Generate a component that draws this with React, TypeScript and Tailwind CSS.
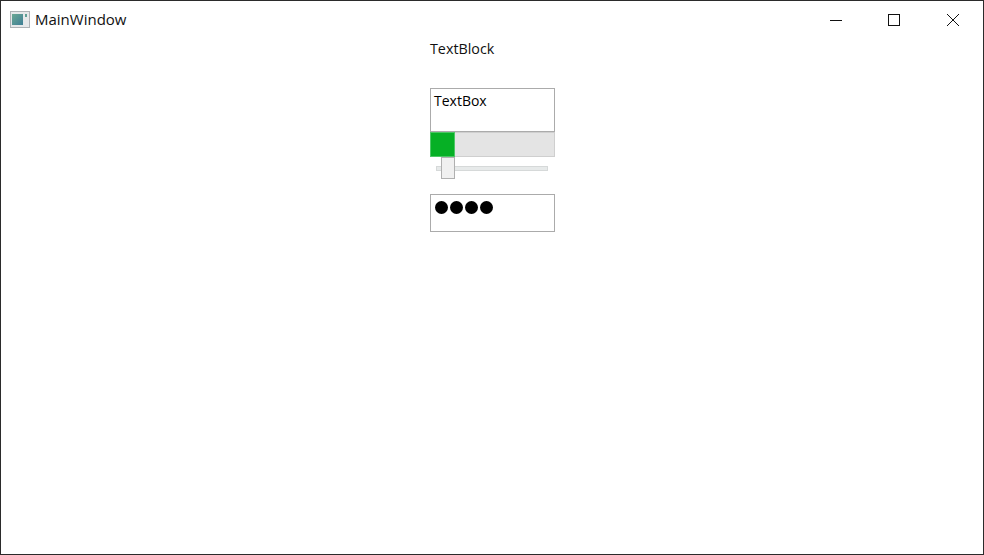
export default function App() {
  return (
    <div className="flex h-[555px] w-[984px] flex-col overflow-hidden border border-[#2b2b2b] bg-white font-['Open_Sans','Noto_Sans',sans-serif] text-black">
      {/* Title bar */}
      <div className="flex h-[37px] shrink-0 items-center pl-[9px]">
        <svg width="20" height="17" viewBox="0 0 20 17" className="mr-[5px]">
          <defs>
            <linearGradient id="pane" x1="0" y1="0" x2="1" y2="1">
              <stop offset="0" stopColor="#6aa894" />
              <stop offset="1" stopColor="#3f7f96" />
            </linearGradient>
          </defs>
          <rect x="0.5" y="0.5" width="19" height="16" fill="#e6e8ea" stroke="#aeb2b6" />
          <rect x="2" y="3" width="11" height="11" fill="url(#pane)" />
          <rect x="15" y="3" width="2" height="3" fill="#5f9f96" />
        </svg>
        <span className="text-[15px] leading-none text-[#111]">MainWindow</span>
        <div className="ml-auto flex h-full items-center pr-[2px]">
          <div className="flex w-[58px] justify-center">
            <svg width="14" height="14" viewBox="0 0 14 14">
              <path d="M1 7.5H13" stroke="#111" fill="none" />
            </svg>
          </div>
          <div className="flex w-[58px] justify-center">
            <svg width="14" height="14" viewBox="0 0 14 14">
              <rect x="1.5" y="1.5" width="11" height="11" stroke="#111" fill="none" />
            </svg>
          </div>
          <div className="flex w-[58px] justify-center pl-[1px]">
            <svg width="14" height="14" viewBox="0 0 14 14">
              <path d="M1 1L13 13M13 1L1 13" stroke="#111" fill="none" />
            </svg>
          </div>
        </div>
      </div>

      {/* Controls */}
      <div className="ml-[429px] flex w-[125px] flex-col">
        <div className="h-[50px] pt-[1px] text-[14.3px] leading-[20px] text-[#111]">TextBlock</div>

        <div className="h-[44px] border border-[#ababab] px-[3px] pt-[2px] text-[14px] leading-[20px]">TextBox</div>

        <div className="h-[25px] border border-[#cfcfcf] bg-[#e4e4e4]">
          <div className="-ml-[1px] -mt-[1px] h-[25px] w-[25px] border border-[#4cc765] bg-[#06b025]" />
        </div>

        <div className="relative h-[22px]">
          <div className="ml-[6px] mt-[9px] h-[5px] w-[112px] border border-[#d6d9d9] bg-[#e7eaea]" />
          <div className="absolute left-[11px] top-0 h-[22px] w-[14px] border border-[#b0b0b0] bg-[#f0f0f0]" />
        </div>

        <div className="mt-[15px] flex h-[38px] gap-[2px] border border-[#ababab] pl-[4px] pt-[6px]">
          <span className="h-[13px] w-[13px] rounded-full bg-black" />
          <span className="h-[13px] w-[13px] rounded-full bg-black" />
          <span className="h-[13px] w-[13px] rounded-full bg-black" />
          <span className="h-[13px] w-[13px] rounded-full bg-black" />
        </div>
      </div>
    </div>
  );
}
